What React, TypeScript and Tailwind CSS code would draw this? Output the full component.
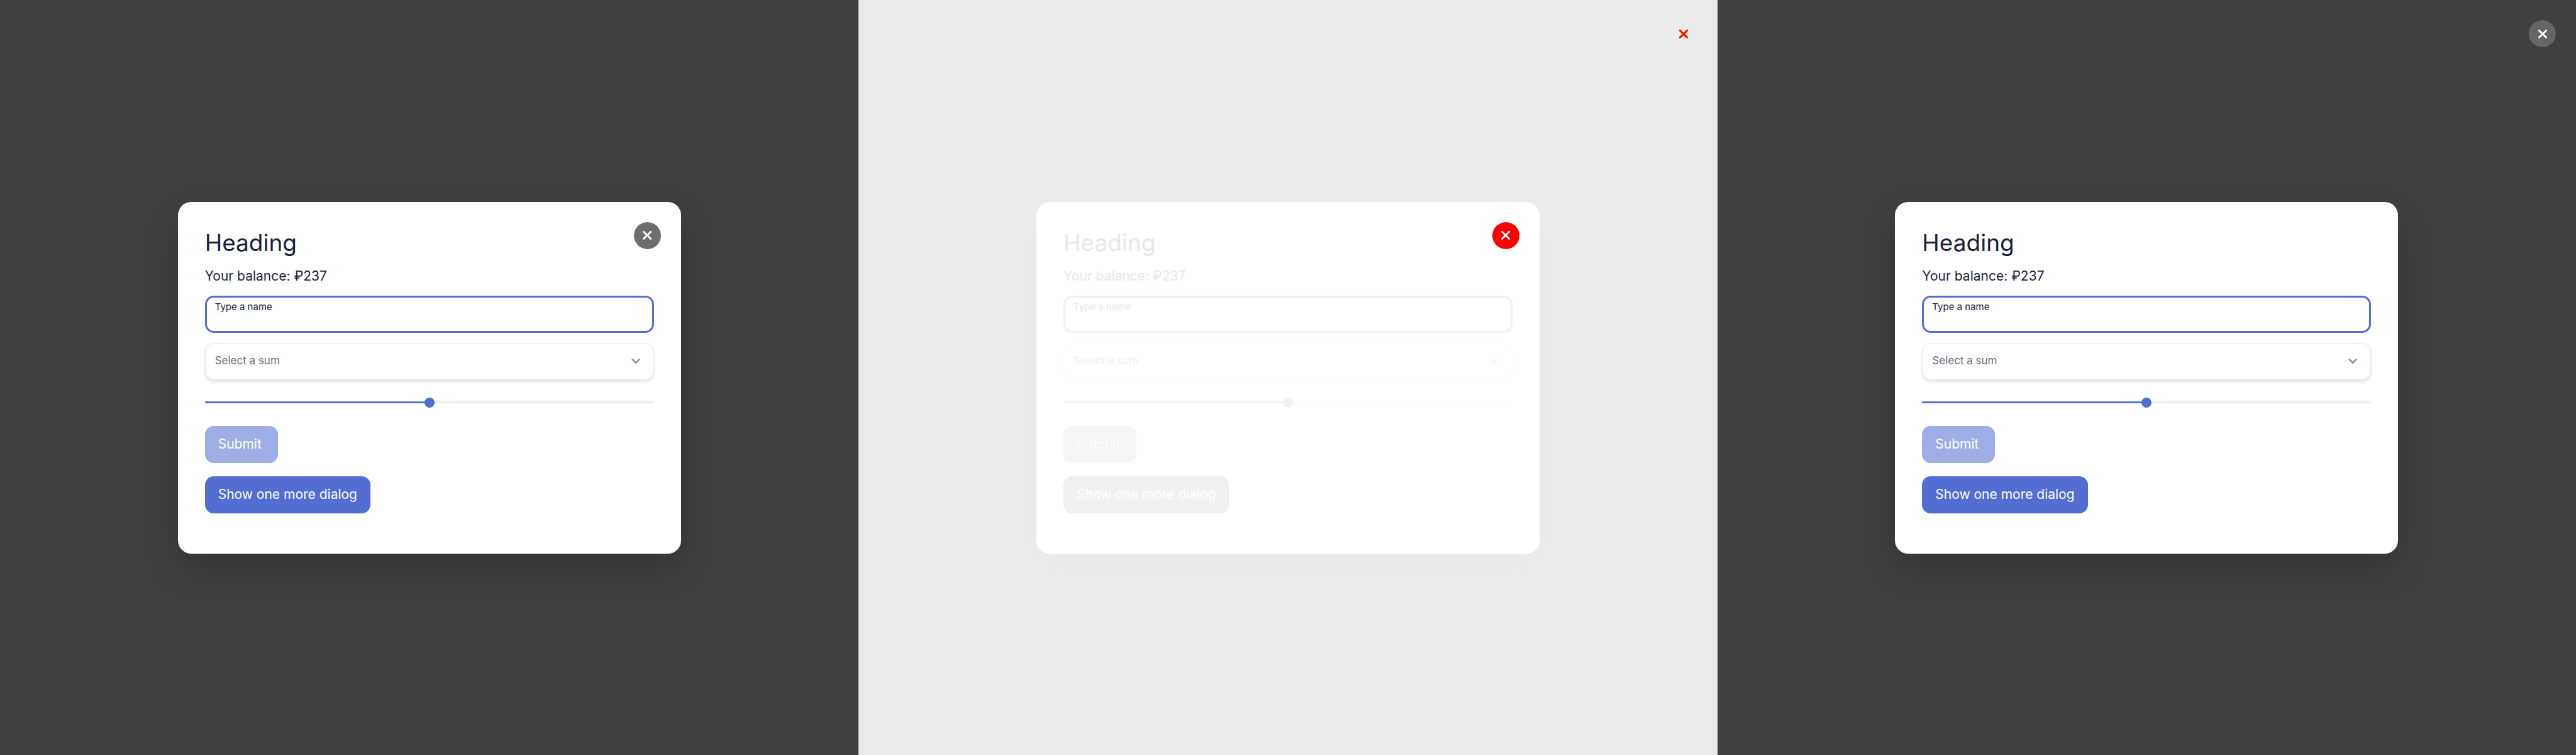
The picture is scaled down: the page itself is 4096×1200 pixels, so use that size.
type Tone = {
  heading: string;
  field: string;
  label: string;
  select: string;
  chevron: string;
  slider: string;
  submit: string;
  show: string;
  card: string;
};

const normal: Tone = {
  heading: "text-[#1b1f3b]",
  field: "border-[#526ed3]",
  label: "text-[#1b1f3b]",
  select: "border-[#e5e5e5] text-[#6b6d80] shadow-[0_3px_4px_rgba(0,0,0,0.1)]",
  chevron: "text-[#8d8f9d]",
  slider:
    "[&::-webkit-slider-runnable-track]:bg-[linear-gradient(to_right,#526ed3_50%,#ededed_50%)] [&::-webkit-slider-thumb]:bg-[#526ed3]",
  submit: "bg-[#9eade6]",
  show: "bg-[#526ed3]",
  card: "shadow-[0_24px_60px_rgba(0,0,0,0.2)]",
};

const faded: Tone = {
  heading: "text-[#e8e8e8]",
  field: "border-[#f0f0f0]",
  label: "text-[#e8e8e8]",
  select: "border-[#fcfcfc] text-[#f0f0f0] shadow-[0_3px_4px_rgba(0,0,0,0.01)]",
  chevron: "text-[#f3f3f3]",
  slider:
    "[&::-webkit-slider-runnable-track]:bg-[linear-gradient(to_right,#f0f0f0_50%,#fcfcfc_50%)] [&::-webkit-slider-thumb]:bg-[#f0f0f0]",
  submit: "bg-[#f6f6f6]",
  show: "bg-[#f0f0f0]",
  card: "shadow-[0_24px_60px_rgba(0,0,0,0.01)]",
};

function Cross({ outlined = false }: { outlined?: boolean }) {
  return (
    <svg viewBox="0 0 20 20" className="h-[14px] w-[14px]" fill="none" strokeLinecap="round">
      {outlined ? (
        <>
          <path d="M2 2 18 18M18 2 2 18" stroke="#ffff00" strokeWidth="5" strokeLinecap="square" />
          <path d="M2 2 18 18M18 2 2 18" stroke="#ff0000" strokeWidth="4" />
        </>
      ) : (
        <path d="M2 2 18 18M18 2 2 18" stroke="currentColor" strokeWidth="4" />
      )}
    </svg>
  );
}

function CloseButton({ className, outlined }: { className: string; outlined?: boolean }) {
  return (
    <button
      type="button"
      aria-label="Close"
      className={`absolute right-8 top-8 flex h-[43px] w-[43px] items-center justify-center rounded-full text-white ${className}`}
    >
      <Cross outlined={outlined} />
    </button>
  );
}

function Dialog({ id, tone, close }: { id: string; tone: Tone; close?: string }) {
  return (
    <section
      role="dialog"
      aria-labelledby={`${id}-title`}
      className={`relative flex w-full max-w-[800px] flex-col items-start rounded-[21px] bg-white px-[43px] pb-16 pt-[43px] ${tone.card}`}
    >
      {close && <CloseButton className={close} />}
      <h1 id={`${id}-title`} className={`text-[37px] leading-[44px] ${tone.heading}`}>
        Heading
      </h1>
      <p className={`mt-[17px] text-[21px] leading-7 ${tone.heading}`}>Your balance: ₽237</p>

      <div className={`mt-[17px] flex h-[59px] w-full flex-col rounded-[14px] border-3 px-[13px] pt-[5px] ${tone.field}`}>
        <label htmlFor={`${id}-name`} className={`text-[15px] leading-5 ${tone.label}`}>
          Type a name
        </label>
        <input id={`${id}-name`} type="text" className={`w-full bg-transparent text-[17px] leading-5 outline-none ${tone.label}`} />
      </div>

      <div className="relative mt-4 w-full">
        <select
          aria-label="Select a sum"
          defaultValue=""
          className={`block h-[59px] w-full appearance-none rounded-[14px] border bg-white px-[15px] text-[17px] outline-none ${tone.select}`}
        >
          <option value="">Select a sum</option>
        </select>
        <svg
          viewBox="0 0 20 12"
          className={`pointer-events-none absolute right-[22px] top-[25px] h-2 w-[14px] ${tone.chevron}`}
          fill="none"
          stroke="currentColor"
          strokeWidth="4"
          strokeLinecap="round"
          strokeLinejoin="round"
        >
          <path d="M2 2 10 10 18 2" />
        </svg>
      </div>

      <input
        type="range"
        aria-label="Sum"
        min={0}
        max={100}
        defaultValue={50}
        className={`mt-7 block h-4 w-full appearance-none bg-transparent [&::-webkit-slider-runnable-track]:h-[3px] [&::-webkit-slider-runnable-track]:rounded-full [&::-webkit-slider-thumb]:-mt-[6px] [&::-webkit-slider-thumb]:h-4 [&::-webkit-slider-thumb]:w-4 [&::-webkit-slider-thumb]:appearance-none [&::-webkit-slider-thumb]:rounded-full ${tone.slider}`}
      />

      <button
        type="button"
        className={`mt-[29px] h-[59px] min-w-[116px] rounded-[14px] px-[21px] text-left text-[21px] text-white ${tone.submit}`}
      >
        Submit
      </button>
      <button type="button" className={`mt-[21px] h-[59px] rounded-[14px] px-[21px] text-[21px] text-white ${tone.show}`}>
        Show one more dialog
      </button>
    </section>
  );
}

export default function App() {
  return (
    <main className="grid min-h-screen grid-cols-3 font-['Inter',sans-serif]">
      <div className="relative flex items-center justify-center bg-[#404040]">
        <Dialog id="before" tone={normal} close="bg-[#6e6e6e]" />
      </div>
      <div className="relative flex items-center justify-center bg-[#ebebeb]">
        <CloseButton className="" outlined />
        <Dialog id="diff" tone={faded} close="bg-[#ff0000]" />
      </div>
      <div className="relative flex items-center justify-center bg-[#404040]">
        <CloseButton className="bg-[#666666]" />
        <Dialog id="after" tone={normal} />
      </div>
    </main>
  );
}
